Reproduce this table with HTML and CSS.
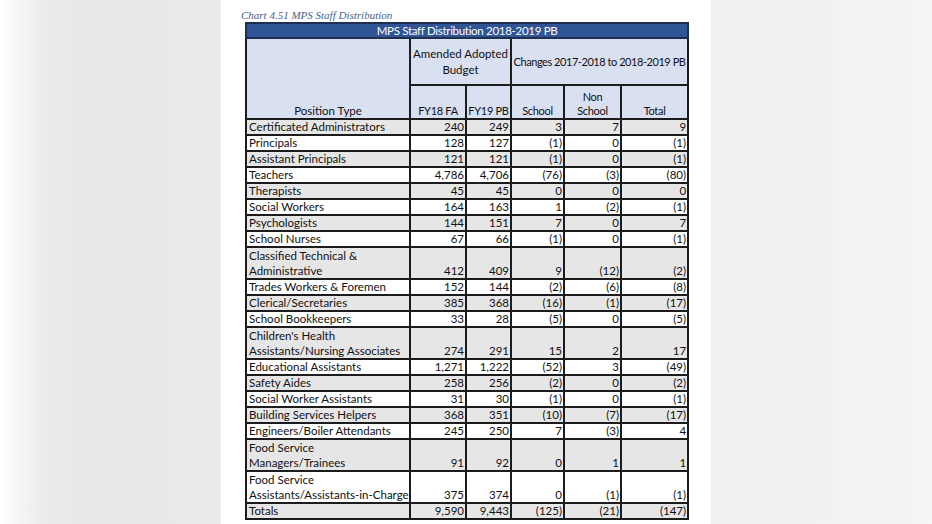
FILE: index.html
```html
<!DOCTYPE html>
<html lang="en">
<head>
<meta charset="utf-8">
<title>MPS Staff Distribution</title>
<link rel="stylesheet" href="styles.css">
</head>
<body>
<div class="screen">
  <div class="side side-left"></div>
  <main class="page">
    <p class="caption">Chart 4.51 MPS Staff Distribution</p>
    <table class="staff">
      <colgroup>
        <col class="c-pos"><col class="c-fa"><col class="c-pb"><col class="c-sch"><col class="c-non"><col class="c-tot">
      </colgroup>
      <thead>
        <tr class="t-title"><th colspan="6">MPS Staff Distribution 2018-2019 PB</th></tr>
        <tr class="t-h1">
          <th rowspan="2" class="pos-head">Position Type</th>
          <th colspan="2">Amended Adopted<br>Budget</th>
          <th colspan="3" class="changes">Changes 2017-2018 to 2018-2019 PB</th>
        </tr>
        <tr class="t-h2">
          <th>FY18 FA</th><th>FY19 PB</th><th>School</th><th>Non<br>School</th><th>Total</th>
        </tr>
      </thead>
      <tbody>
        <tr class="g"><td>Certificated Administrators</td><td>240</td><td>249</td><td>3</td><td>7</td><td>9</td></tr>
        <tr><td>Principals</td><td>128</td><td>127</td><td>(1)</td><td>0</td><td>(1)</td></tr>
        <tr class="g"><td>Assistant Principals</td><td>121</td><td>121</td><td>(1)</td><td>0</td><td>(1)</td></tr>
        <tr><td>Teachers</td><td>4,786</td><td>4,706</td><td>(76)</td><td>(3)</td><td>(80)</td></tr>
        <tr class="g"><td>Therapists</td><td>45</td><td>45</td><td>0</td><td>0</td><td>0</td></tr>
        <tr><td>Social Workers</td><td>164</td><td>163</td><td>1</td><td>(2)</td><td>(1)</td></tr>
        <tr class="g"><td>Psychologists</td><td>144</td><td>151</td><td>7</td><td>0</td><td>7</td></tr>
        <tr><td>School Nurses</td><td>67</td><td>66</td><td>(1)</td><td>0</td><td>(1)</td></tr>
        <tr class="g dbl"><td>Classified Technical &amp;<br>Administrative</td><td>412</td><td>409</td><td>9</td><td>(12)</td><td>(2)</td></tr>
        <tr><td>Trades Workers &amp; Foremen</td><td>152</td><td>144</td><td>(2)</td><td>(6)</td><td>(8)</td></tr>
        <tr class="g"><td>Clerical/Secretaries</td><td>385</td><td>368</td><td>(16)</td><td>(1)</td><td>(17)</td></tr>
        <tr><td>School Bookkeepers</td><td>33</td><td>28</td><td>(5)</td><td>0</td><td>(5)</td></tr>
        <tr class="g dbl"><td>Children's Health<br>Assistants/Nursing Associates</td><td>274</td><td>291</td><td>15</td><td>2</td><td>17</td></tr>
        <tr><td>Educational Assistants</td><td>1,271</td><td>1,222</td><td>(52)</td><td>3</td><td>(49)</td></tr>
        <tr class="g"><td>Safety Aides</td><td>258</td><td>256</td><td>(2)</td><td>0</td><td>(2)</td></tr>
        <tr><td>Social Worker Assistants</td><td>31</td><td>30</td><td>(1)</td><td>0</td><td>(1)</td></tr>
        <tr class="g"><td>Building Services Helpers</td><td>368</td><td>351</td><td>(10)</td><td>(7)</td><td>(17)</td></tr>
        <tr><td>Engineers/Boiler Attendants</td><td>245</td><td>250</td><td>7</td><td>(3)</td><td>4</td></tr>
        <tr class="g dbl"><td>Food Service<br>Managers/Trainees</td><td>91</td><td>92</td><td>0</td><td>1</td><td>1</td></tr>
        <tr class="dbl"><td>Food Service<br>Assistants/Assistants-in-Charge</td><td>375</td><td>374</td><td>0</td><td>(1)</td><td>(1)</td></tr>
        <tr class="g total"><td>Totals</td><td>9,590</td><td>9,443</td><td>(125)</td><td>(21)</td><td>(147)</td></tr>
      </tbody>
    </table>
  </main>
  <div class="side side-right"></div>
</div>
</body>
</html>
```
FILE: styles.css
```css
html, body {
  margin: 0;
  padding: 0;
  background: #f2f2f2;
}

.screen {
  display: flex;
  width: 932px;
  height: 524px;
  overflow: hidden;
}

.side {
  flex: 0 0 221px;
}

.side-left {
  background: linear-gradient(to right, #ffffff 0px, #ececec 40px, #e8e8e8 90px, #eaeaea 221px);
}

.side-right {
  background: linear-gradient(to right, #f1f1f1 0px, #f2f2f2 180px, #f6f6f6 221px);
}

.page {
  flex: 0 0 490px;
  background: #ffffff;
  padding: 0 0 0 24px;
  box-sizing: border-box;
}

.caption {
  margin: 8px 0 0 -4px;
  height: 14px;
  font-family: "Liberation Serif", "DejaVu Serif", serif;
  font-style: italic;
  font-size: 11px;
  line-height: 14px;
  color: #46628c;
}

.staff {
  border-collapse: collapse;
  table-layout: fixed;
  width: 444px;
  font-family: Lato, "Open Sans", sans-serif;
  font-size: 11.5px;
  color: #111111;
}

.c-pos { width: 164px; }
.c-fa { width: 56px; }
.c-pb { width: 45px; }
.c-sch { width: 53px; }
.c-non { width: 57px; }
.c-tot { width: 67px; }

.staff th,
.staff td {
  border: 2px solid #1c1c1c;
  padding: 0 1px;
  line-height: 14px;
  white-space: nowrap;
  overflow: visible;
}

.staff th {
  font-weight: normal;
  background: #d9e0f1;
  text-align: center;
}

.t-title th {
  background: #2f5597;
  color: #ffffff;
  height: 13px;
  line-height: 13px;
  letter-spacing: -0.3px;
  border-color: #1f2f4f;
}

.t-h1 th {
  height: 45px;
  line-height: 16px;
  vertical-align: middle;
}

.t-h1 .changes {
  font-size: 11px;
  letter-spacing: -0.45px;
}

.t-h1 .pos-head {
  vertical-align: bottom;
  line-height: 14px;
  padding-bottom: 0;
}

.t-h2 th {
  height: 32px;
  line-height: 14px;
  vertical-align: bottom;
  padding-bottom: 0;
  font-size: 11px;
  letter-spacing: -0.3px;
}

.staff td {
  height: 14px;
  text-align: right;
  vertical-align: bottom;
}

.staff td:first-child {
  text-align: left;
  padding-left: 2px;
}

.staff tr.g td {
  background: #e7e6e6;
}

.staff tr.dbl td {
  height: 30px;
  line-height: 15px;
}
```
